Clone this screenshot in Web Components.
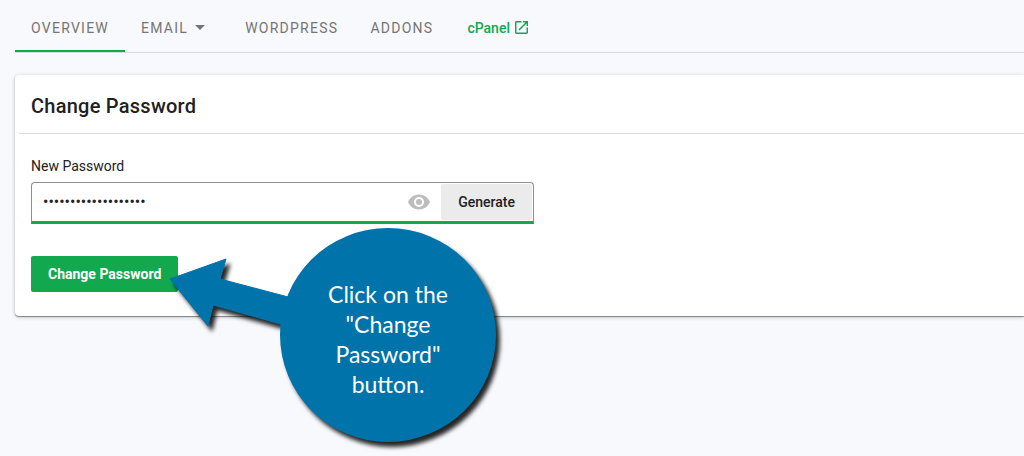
<!DOCTYPE html>
<html lang="en">
<head>
<meta charset="utf-8">
<meta name="viewport" content="width=device-width, initial-scale=1">
<title>Change Password</title>
<style>
  html { min-height: 100%; background: #f8f9fd; }
  body {
    margin: 0;
    font-family: Roboto, "Liberation Sans", sans-serif;
    font-size: 14px;
    color: #212121;
    --green: #11a84e;
    --blue: #0073ab;
  }
</style>
</head>
<body>
<account-page>
  <tab-bar slot="nav">
    <tab-item href="#overview" active>OVERVIEW</tab-item>
    <tab-item href="#email" menu>EMAIL</tab-item>
    <tab-item href="#wordpress">WORDPRESS</tab-item>
    <tab-item href="#addons">ADDONS</tab-item>
    <tab-item href="#cpanel" external>cPanel</tab-item>
  </tab-bar>
  <panel-card heading="Change Password">
    <password-form></password-form>
  </panel-card>
  <call-out slot="hint">Click on the "Change Password" button.</call-out>
</account-page>

<template id="account-page">
  <style>
    :host { display: block; position: relative; box-sizing: border-box; min-height: 100vh; padding-left: 15px; }
    main { padding-top: 22px; }
    ::slotted(call-out) { position: absolute; left: 168px; top: 226px; }
  </style>
  <slot name="nav"></slot>
  <main><slot></slot></main>
  <slot name="hint"></slot>
</template>

<template id="tab-bar">
  <style>
    :host { display: block; }
    nav { display: flex; height: 52px; border-bottom: 1px solid #d5d9e2; }
  </style>
  <nav aria-label="Account"><slot></slot></nav>
</template>

<template id="tab-item">
  <style>
    :host { display: flex; }
    a {
      display: flex; align-items: center; gap: 7px;
      padding: 5px 16px 0; border-bottom: 2px solid transparent;
      color: #757575; text-decoration: none; line-height: 20px;
      letter-spacing: 0.09em;
    }
    :host([active]) a { border-color: var(--green); }
    :host([menu]) a { padding-right: 24px; }
    :host([external]) a { color: var(--green); font-weight: 500; letter-spacing: normal; gap: 5px; padding-left: 18px; }
    svg { display: none; fill: currentColor; }
    :host([menu]) .caret, :host([external]) .open { display: block; }
  </style>
  <a>
    <slot></slot>
    <svg class="caret" width="10" height="5" viewBox="0 0 10 5"><path d="M0 0h10L5 5z"/></svg>
    <svg class="open" width="13" height="13" viewBox="3 3 18 18"><path d="M19 19H5V5h7V3H5a2 2 0 0 0-2 2v14a2 2 0 0 0 2 2h14c1.100 0 2-.9 2-2v-7h-2v7zM14 3v2h3.590l-9.830 9.830 1.410 1.410L19 6.410V10h2V3h-7z"/></svg>
  </a>
</template>

<template id="panel-card">
  <style>
    :host { display: block; }
    section {
      background: #fff; border-radius: 4px 0 0 4px; padding-bottom: 24px;
      box-shadow: 0 1px 1px rgba(0,0,0,.4), 0 1px 4px rgba(0,0,0,.22);
    }
    h2 {
      margin: 0 0 0 4px; padding: 17px 12px 13px; border-bottom: 1px solid #dcdcdc;
      font-size: 20px; font-weight: 500; line-height: 28px;
      letter-spacing: 0.0125em;
    }
    .body { padding: 22px 16px 0; }
  </style>
  <section>
    <h2></h2>
    <div class="body"><slot></slot></div>
  </section>
</template>

<template id="password-form">
  <style>
    :host { display: block; }
    label { display: block; line-height: 20px; }
    .field {
      display: flex; align-items: center; box-sizing: border-box;
      max-width: 503px; height: 42px; margin: 6px 0 32px;
      border: 1px solid #8e8e8e; border-bottom: 3px solid var(--green);
      border-radius: 4px 4px 0 0; background: #fff;
    }
    input {
      flex: 1; min-width: 0; border: 0; outline: 0; padding: 0 11px;
      font: 16px/24px Roboto, sans-serif; color: #212121; background: none;
    }
    button { font: 500 14px/20px Roboto, sans-serif; border: 0; cursor: pointer; }
    .reveal { display: flex; padding: 0; background: none; margin-right: 10px; color: #bdbdbd; }
    .generate { background: #ebebeb; color: #212121; height: 36px; padding: 0 17px; border-radius: 2px; margin-right: 1px; }
    .submit { background: var(--green); color: #fff; height: 36px; padding: 0 17px; border-radius: 2px; font-weight: 700; display: block; }
    svg { fill: currentColor; }
  </style>
  <form>
    <label for="pw">New Password</label>
    <div class="field">
      <input id="pw" type="password" value="k3Vw9qLm2Xz7Rt5Bn8c" autocomplete="new-password">
      <button class="reveal" type="button" aria-label="Show password">
        <svg width="24" height="24" viewBox="0 0 24 24"><path d="M12 4.500C7 4.500 2.730 7.610 1 12c1.730 4.390 6 7.500 11 7.500s9.270-3.110 11-7.500c-1.730-4.390-6-7.500-11-7.500zM12 17a5 5 0 1 1 0-10 5 5 0 0 1 0 10zm0-8a3 3 0 1 0 0 6 3 3 0 0 0 0-6z"/></svg>
      </button>
      <button class="generate" type="button">Generate</button>
    </div>
    <button class="submit" type="button">Change Password</button>
  </form>
</template>

<template id="call-out">
  <style>
    :host { display: block; width: 340px; height: 230px; pointer-events: none; }
    .bubble { position: relative; display: flex; justify-content: flex-end; height: 100%; }
    svg { position: absolute; inset: 0; overflow: visible; fill: var(--blue); filter: drop-shadow(4px 5px 2px rgba(0,0,0,.85)); }
    p {
      position: relative; margin: 53px 52px 0 0; width: 136px; text-align: center;
      color: #fff; font: 23px/30px Lato, sans-serif;
    }
  </style>
  <div class="bubble">
    <svg width="340" height="230" viewBox="0 0 340 230" aria-hidden="true">
      <path d="M2 53L58 33L52 53L124 72L116 99L45 79L40 100Z" stroke="var(--blue)" stroke-width="1" stroke-linejoin="round"/>
      <ellipse cx="220" cy="109" rx="108" ry="107"/>
    </svg>
    <p><slot></slot></p>
  </div>
</template>

<script>
  const clone = id => document.getElementById(id).content.cloneNode(true);

  class BaseElement extends HTMLElement {
    constructor() {
      super();
      this.attachShadow({ mode: 'open' }).append(clone(this.localName));
    }
  }

  customElements.define('account-page', class extends BaseElement {});
  customElements.define('tab-bar', class extends BaseElement {});
  customElements.define('call-out', class extends BaseElement {});

  customElements.define('tab-item', class extends BaseElement {
    connectedCallback() {
      const link = this.shadowRoot.querySelector('a');
      link.href = this.getAttribute('href');
      if (this.hasAttribute('active')) link.setAttribute('aria-current', 'page');
    }
  });

  customElements.define('panel-card', class extends BaseElement {
    connectedCallback() {
      this.shadowRoot.querySelector('h2').textContent = this.getAttribute('heading');
    }
  });

  customElements.define('password-form', class extends BaseElement {
    connectedCallback() {
      const input = this.shadowRoot.querySelector('input');
      this.shadowRoot.querySelector('.reveal').addEventListener('click', () => {
        input.type = input.type === 'password' ? 'text' : 'password';
      });
      this.shadowRoot.querySelector('.generate').addEventListener('click', () => {
        const chars = 'ABCDEFGHJKLMNPQRSTUVWXYZabcdefghijkmnpqrstuvwxyz23456789';
        input.value = Array.from(crypto.getRandomValues(new Uint8Array(19)), n => chars[n % chars.length]).join('');
      });
    }
  });
</script>
</body>
</html>
